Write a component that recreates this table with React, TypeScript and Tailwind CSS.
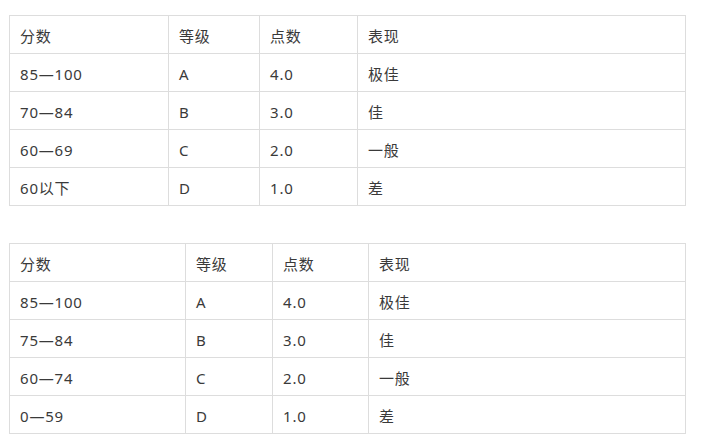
import React from 'react';

type Row = [string, string, string, string];

const HEAD: Row = ['分数', '等级', '点数', '表现'];

const TABLES: { cols: number[]; rows: Row[] }[] = [
  {
    cols: [159, 91, 98, 328],
    rows: [
      ['85—100', 'A', '4.0', '极佳'],
      ['70—84', 'B', '3.0', '佳'],
      ['60—69', 'C', '2.0', '一般'],
      ['60以下', 'D', '1.0', '差'],
    ],
  },
  {
    cols: [176, 87, 96, 317],
    rows: [
      ['85—100', 'A', '4.0', '极佳'],
      ['75—84', 'B', '3.0', '佳'],
      ['60—74', 'C', '2.0', '一般'],
      ['0—59', 'D', '1.0', '差'],
    ],
  },
];

function GradeTable({ cols, rows }: { cols: number[]; rows: Row[] }) {
  return (
    <table className="border-collapse table-fixed w-[677px] text-[15px] text-[#3a3a3a] tracking-[0.8px]">
      <colgroup>
        {cols.map((w, i) => (
          <col key={i} style={{ width: w }} />
        ))}
      </colgroup>
      <tbody>
        {[HEAD, ...rows].map((r, i) => (
          <tr key={i} className="h-[38px]">
            {r.map((c, j) => (
              <td key={j} className="border border-[#dddddd] px-[10px] pt-[2px] pb-0 align-middle leading-[20px]">
                {c}
              </td>
            ))}
          </tr>
        ))}
      </tbody>
    </table>
  );
}

export default function App() {
  return (
    <div
      className="bg-white w-[701px] h-[443px] pl-[9px] pt-[15px] flex flex-col gap-[37px]"
      style={{ fontFamily: '"Noto Sans", "Noto Sans CJK SC", sans-serif' }}
    >
      {TABLES.map((t, i) => (
        <GradeTable key={i} cols={t.cols} rows={t.rows} />
      ))}
    </div>
  );
}
